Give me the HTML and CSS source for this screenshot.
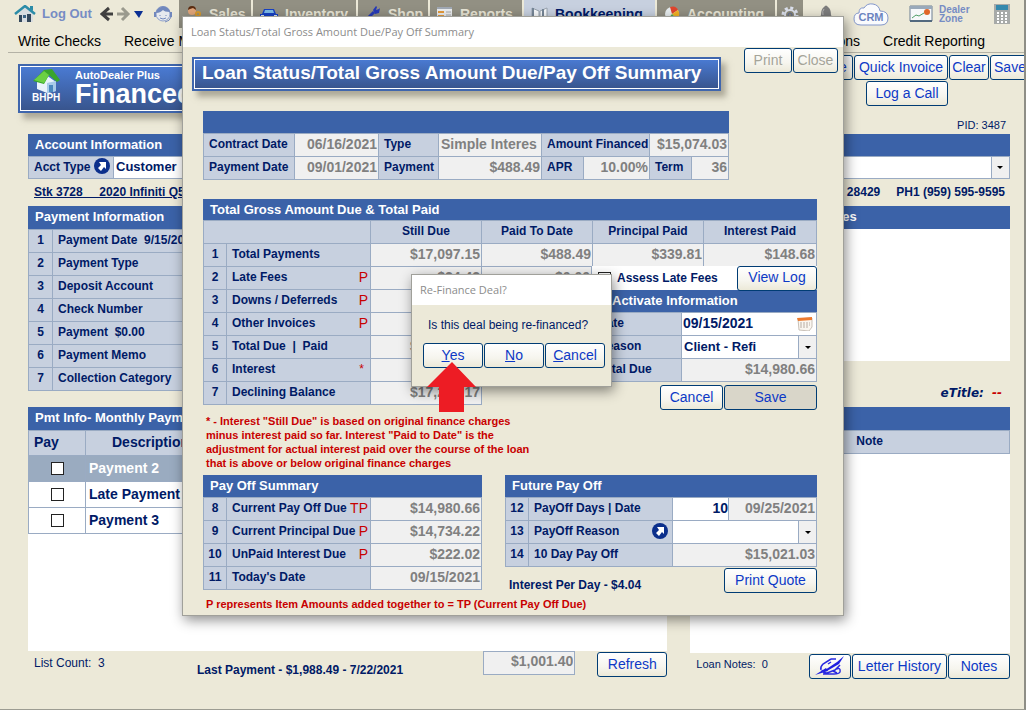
FILE: index.html
```html
<!DOCTYPE html>
<html lang="en">

<head>
    <meta charset="UTF-8">
    <meta name="viewport" content="width=device-width, initial-scale=1.0">
    <title>AutoDealer Plus - Financed</title>
    <link rel="stylesheet" href="styles.css">
</head>

<body>
    <div class="page">
        <!-- top bar -->
        <div class="topbar">
            <a href="#" class="logout">
                <svg width="22" height="18" viewBox="0 0 22 18">
                    <path d="M5 8v9h14V8l-7-6z" fill="#d9dde0" />
                    <path d="M1 9L11 1l10 8" fill="none" stroke="#2b8ca8" stroke-width="2.5" />
                    <path d="M16 1h3v5l-3-2z" fill="#2b8ca8" />
                    <path d="M5 10h3v7H5zM13 9h4v8h-4z" fill="#34485c" />
                    <path d="M9 10h3v3H9z" fill="#3d6484" />
                </svg>
                Log Out
            </a>
            <svg class="nav-arrows" width="44" height="16" viewBox="0 0 44 16">
                <path d="M13 8H3M9 2L2 8l7 6" fill="none" stroke="#404040" stroke-width="3" />
                <path d="M17 8h10M22 2l6 6-6 6" fill="none" stroke="#9a9a8e" stroke-width="3" />
                <path d="M34 5h9l-4 7z" fill="#0a2f94" />
            </svg>
            <svg class="support" width="20" height="18" viewBox="0 0 20 18">
                <path d="M3 9C3 -1 17 -1 17 9" fill="none" stroke="#7188bd" />
                <circle cx="10" cy="9" r="7" fill="#e6e9ee" stroke="#8fa1cb" />
                <path d="M3 8C4 0 16 0 17 7C13 7 11 6 10 5C8 7 6 8 3 8z" fill="#7188bd" />
                <path d="M1 7h2v5H1zM17 7h2v5h-2z" fill="#7188bd" />
                <path d="M7 13q3 2 6 0M7 10v1M13 10v1M18 12q-1 4-6 5" fill="none" stroke="#7188bd" />
            </svg>
            <nav class="tabs">
                <a href="#" class="tab tab-sales">
                    <svg width="16" height="16" viewBox="0 0 16 16">
                        <circle cx="6" cy="5" r="4" fill="#e2a67a" />
                        <path d="M2 4q0-4 4-4t4 4l-3-2-3 1z" fill="#5a2c12" />
                        <path d="M0 16q0-6 6-6t6 6z" fill="#3c5876" />
                        <circle cx="12" cy="8" r="2" fill="none" stroke="#d99a2a" stroke-width="2" />
                    </svg>
                    Sales
                </a>
                <a href="#" class="tab tab-inventory">
                    <svg width="18" height="16" viewBox="0 0 18 16">
                        <path d="M4 3h10l2 5h2v6H0V8h2z" fill="#1741c4" />
                        <path d="M5 4h8l1 3H4z" fill="#7dbbe8" />
                        <path d="M1 9h3v2H1zM14 9h3v2h-3z" fill="#dceaf4" />
                    </svg>
                    Inventory
                </a>
                <a href="#" class="tab tab-shop">
                    <svg width="16" height="16" viewBox="0 0 16 16">
                        <path d="M2 13L9 6" stroke="#2539b8" stroke-width="3" />
                        <path d="M8 4l3-4 1 1-1 3 3-1 1-1-1 5-4 1z" fill="#2539b8" />
                    </svg>
                    Shop
                </a>
                <a href="#" class="tab tab-reports">
                    <svg width="16" height="16" viewBox="0 0 16 16">
                        <path d="M0 1h15v14H0z" fill="#eceef0" />
                        <path d="M0 1h15v2H0z" fill="#a0a8b4" />
                        <path d="M1 5h6v2H1zM1 9h6v2H1z" fill="#e59b3c" />
                        <path d="M9 6h5M9 9h5" stroke="#aaa" />
                    </svg>
                    Reports
                </a>
                <a href="#" class="tab tab-books active">
                    <svg width="17" height="16" viewBox="0 0 17 16">
                        <path d="M1 2l7 3v11l-7-3zM16 2L9 5v11l7-3z" fill="#f8fafc" stroke="#98a2ae" />
                        <path d="M12 3v8M2 2v11" stroke="#768697" stroke-width="2" />
                    </svg>
                    Bookkeeping
                </a>
                <a href="#" class="tab tab-accounting">
                    <svg width="16" height="16" viewBox="0 0 16 16">
                        <circle cx="8" cy="8" r="7" fill="#e8eef0" />
                        <path d="M8 8L6 1q6-2 8 3z" fill="#e0452c" />
                        <path d="M8 8l6-4q3 5-1 9z" fill="#f4b323" />
                        <path d="M8 8l5 5q-5 4-9 0z" fill="#5ba845" />
                    </svg>
                    Accounting
                </a>
                <a href="#" class="tab tab-gear" aria-label="Settings">
                    <svg width="18" height="18" viewBox="0 0 18 18">
                        <circle cx="9" cy="9" r="7" fill="none" stroke="#dde2ee" stroke-width="3" stroke-dasharray="3 2.5" />
                        <circle cx="9" cy="9" r="5" fill="#8b8878" stroke="#dde2ee" stroke-width="2" />
                        <circle cx="9" cy="9" r="2" fill="none" stroke="#5d6b95" />
                    </svg>
                </a>
            </nav>
            <div class="quick-icons">
                <svg width="14" height="18" viewBox="0 0 14 18">
                    <path d="M5 2q2-3 4 0q3 2 3 8l2 4H0l2-4q0-6 3-8z" fill="#7d7d7d" />
                    <path d="M5 4q-2 2-1 6" stroke="#b5b5b5" fill="none" />
                </svg>
                <svg width="36" height="23" viewBox="0 0 36 23">
                    <path d="M8 22Q1 22 1 16Q1 10 6 10Q6 4 11 5Q14 0 20 1Q26 2 27 8Q35 8 35 15Q35 22 28 22z" fill="#fafbfd" stroke="#8397cb" />
                    <text x="18" y="18" text-anchor="middle" class="crm-text">CRM</text>
                </svg>
                <a href="#" class="dealer-zone">
                    <svg width="24" height="18" viewBox="0 0 24 18">
                        <path d="M1 1h22v15H1z" fill="#f6f8fa" stroke="#6d7f92" />
                        <path d="M1 1h22v3H1z" fill="#99a9ba" />
                        <path d="M3 13l4-3 3 1 5-3" stroke="#4f9e68" fill="none" />
                        <circle cx="18" cy="7" r="3" fill="#e0662a" />
                        <path d="M1 15h22v2H1z" fill="#53697f" />
                    </svg>
                    <span>Dealer<br>Zone</span>
                </a>
                <svg width="16" height="20" viewBox="0 0 16 20">
                    <path d="M0 0h16v20H0z" fill="#a7aaa8" />
                    <path d="M2 1h12v5H2z" fill="#3489ad" />
                    <path d="M3 9h2M7 9h2M11 9h2M3 12h2M7 12h2M11 12h2M3 15h2M7 15h2M11 15h2M3 18h2M7 18h2M11 18h2" stroke="#fff" stroke-width="2" />
                </svg>
            </div>
        </div>

        <nav class="menu">
            <a href="#">Write Checks</a>
            <a href="#">Receive M</a>
            <a href="#" class="menu-right">ons</a>
            <a href="#">Credit Reporting</a>
        </nav>

        <header class="page-head">
            <div class="banner page-banner">
                <div class="bhph">
                    <svg width="30" height="24" viewBox="0 0 30 24">
                        <path d="M5 12l9-6 10 7v9l-9 2-10-4z" fill="#e9f3fb" />
                        <path d="M15 14l9-2v10l-9 2z" fill="#a8cbe9" />
                        <path d="M1 12L12 1l8-1 8 11-3 2-8-7-5 9z" fill="#39a52b" />
                        <path d="M2 11L12 2l5 4-5 8z" fill="#6bd043" />
                        <path d="M17 16h4v7h-4z" fill="#4a87be" />
                    </svg>
                    <span>BHPH</span>
                </div>
                <div>
                    <div class="banner-small">AutoDealer Plus</div>
                    <h1 class="banner-big">Financed</h1>
                </div>
            </div>
            <div class="head-right">
                <div class="btn-row">
                    <button class="btn btn-first">e</button>
                    <button class="btn btn-invoice">Quick Invoice</button>
                    <button class="btn btn-clear">Clear</button>
                    <button class="btn btn-save">Save</button>
                </div>
                <button class="btn btn-call">Log a Call</button>
                <div class="pid">PID: 3487</div>
            </div>
        </header>

        <main class="columns">
            <!-- left column -->
            <section>
                <h2 class="bar">Account Information</h2>
                <div class="field">
                    <label class="field-label" for="acctType">Acct Type
                        <svg class="go" width="17" height="17" viewBox="0 0 17 17">
                            <circle cx="8" cy="8" r="8" fill="#0b2f8c" />
                            <path d="M5 4h7v7l-2-2-3 4-3-3 3-3z" fill="#fff" />
                        </svg>
                    </label>
                    <div class="combo">
                        <select id="acctType"><option>Customer</option></select>
                        <span class="combo-btn"></span>
                    </div>
                </div>
                <div class="summary stock">
                    <a href="#">Stk 3728 &nbsp; &nbsp; 2020 Infiniti Q5</a>
                </div>

                <h2 class="bar bar-tall">Payment Information</h2>
                <table class="grid">
                    <tr><th class="num">1</th><th>Payment Date &nbsp;9/15/20</th></tr>
                    <tr><th class="num">2</th><th>Payment Type</th></tr>
                    <tr><th class="num">3</th><th>Deposit Account</th></tr>
                    <tr><th class="num">4</th><th>Check Number</th></tr>
                    <tr><th class="num">5</th><th>Payment &nbsp;$0.00</th></tr>
                    <tr><th class="num">6</th><th>Payment Memo</th></tr>
                    <tr><th class="num">7</th><th>Collection Category</th></tr>
                </table>

                <h2 class="bar bar-tall list-head">Pmt Info- Monthly Paym</h2>
                <div class="list pay-list">
                    <table class="grid payments">
                        <colgroup>
                            <col class="col-pay">
                            <col class="col-desc">
                            <col>
                        </colgroup>
                        <tr class="head"><th>Pay</th><th class="center">Description</th><th></th></tr>
                        <tr class="selected">
                            <td class="center"><input type="checkbox" id="pay1"></td>
                            <td><label for="pay1">Payment 2</label></td><td></td>
                        </tr>
                        <tr>
                            <td class="center"><input type="checkbox" id="pay2"></td>
                            <td><label for="pay2">Late Payment</label></td><td></td>
                        </tr>
                        <tr>
                            <td class="center"><input type="checkbox" id="pay3"></td>
                            <td><label for="pay3">Payment 3</label></td><td></td>
                        </tr>
                    </table>
                </div>
                <div class="foot">
                    <span class="list-count">List Count: &nbsp;3</span>
                    <span class="last-payment">Last Payment - $1,988.49 - 7/22/2021</span>
                    <input class="total" type="text" value="$1,001.40" aria-label="Total" readonly>
                    <button class="btn btn-refresh">Refresh</button>
                </div>
            </section>

            <!-- right column -->
            <section>
                <h2 class="bar"></h2>
                <div class="field">
                    <div class="combo">
                        <select aria-label="Account"><option></option></select>
                        <span class="combo-btn"></span>
                    </div>
                </div>
                <div class="summary phones"><span>28429</span><span>PH1 (959) 595-9595</span></div>
                <h2 class="bar bar-tall bar-notes">es</h2>
                <div class="list notes-box"></div>
                <div class="etitle">eTitle: <span>--</span></div>
                <h2 class="bar bar-tall"></h2>
                <div class="list loan-notes">
                    <table class="grid">
                        <tr><th class="note-col">Note</th></tr>
                    </table>
                </div>
                <div class="foot foot-right">
                    <span class="note-count">Loan Notes: &nbsp;0</span>
                    <button class="btn btn-pen" aria-label="Write note">
                        <svg width="32" height="22" viewBox="0 0 32 22">
                            <path d="M1 20L12 13l2 3z" fill="#1f1fe0" />
                            <path d="M11 15L23 7L30 1L25 9L13 16z" fill="#1f1fe0" />
                            <path d="M17 4h5M17 4L9 9Q6 12 7 15M8 15Q9 18 13 18L21 15L26 10M14 9l3-2M22 14Q27 12 26 17Q25 19 20 19H9M19 16l4 2" fill="none" stroke="#2a2ae0" stroke-width="1.5" />
                        </svg>
                    </button>
                    <button class="btn btn-letter">Letter History</button>
                    <button class="btn btn-notes">Notes</button>
                </div>
            </section>
        </main>
    </div>

    <!-- loan status window -->
    <div class="overlay">
        <div class="window loan" role="dialog" aria-labelledby="loanTitle">
            <div class="window-title" id="loanTitle">Loan Status/Total Gross Amount Due/Pay Off Summary</div>
            <div class="window-head">
                <h2 class="banner window-banner">Loan Status/Total Gross Amount Due/Pay Off Summary</h2>
                <div class="btn-row">
                    <button class="btn btn-print" disabled>Print</button>
                    <button class="btn btn-close" disabled>Close</button>
                </div>
            </div>
            <div class="window-body">
                <div class="contract">
                    <div class="bar"></div>
                    <table class="grid">
                        <colgroup>
                            <col class="c-date">
                            <col class="c-dateval">
                            <col class="c-type">
                            <col class="c-typeval">
                            <col class="c-apr">
                            <col class="c-aprval">
                            <col class="c-apr">
                            <col>
                        </colgroup>
                        <tr>
                            <th>Contract Date</th><td class="val">06/16/2021</td>
                            <th>Type</th><td class="val val-left">Simple Interes</td>
                            <th colspan="2">Amount Financed</th><td class="val" colspan="2">$15,074.03</td>
                        </tr>
                        <tr>
                            <th>Payment Date</th><td class="val">09/01/2021</td>
                            <th>Payment</th><td class="val">$488.49</td>
                            <th>APR</th><td class="val">10.00%</td>
                            <th>Term</th><td class="val">36</td>
                        </tr>
                    </table>
                </div>

                <h3 class="bar gross-head">Total Gross Amount Due &amp; Total Paid</h3>
                <table class="grid">
                    <colgroup>
                        <col class="c-num">
                        <col class="c-label">
                        <col class="c-amount">
                        <col class="c-amount">
                        <col class="c-amount">
                        <col>
                    </colgroup>
                    <tr>
                        <th colspan="2"></th>
                        <th class="center">Still Due</th>
                        <th class="center">Paid To Date</th>
                        <th class="center">Principal Paid</th>
                        <th class="center">Interest Paid</th>
                    </tr>
                    <tr>
                        <th class="num">1</th><th>Total Payments</th>
                        <td class="val">$17,097.15</td>
                        <td class="val">$488.49</td>
                        <td class="val">$339.81</td>
                        <td class="val">$148.68</td>
                    </tr>
                </table>
                <div class="split">
                    <table class="grid dues">
                        <colgroup>
                            <col class="c-num">
                            <col class="c-label">
                            <col class="c-amount">
                            <col>
                        </colgroup>
                        <tr><th class="num">2</th><th>Late Fees<b class="p">P</b></th><td class="val">$24.42</td><td class="val">$0.00</td></tr>
                        <tr><th class="num">3</th><th>Downs / Deferreds<b class="p">P</b></th><td class="val"></td><td class="val"></td></tr>
                        <tr><th class="num">4</th><th>Other Invoices<b class="p">P</b></th><td class="val"></td><td class="val"></td></tr>
                        <tr><th class="num">5</th><th>Total Due &nbsp;| &nbsp;Paid</th><td class="val">$17,121.57</td><td class="val"></td></tr>
                        <tr><th class="num">6</th><th>Interest<b class="p star">*</b></th><td class="val"></td><td class="val"></td></tr>
                        <tr><th class="num">7</th><th>Declining Balance</th><td class="val">$17,244.17</td><td class="blank"></td></tr>
                    </table>
                    <div class="activate">
                        <div class="assess">
                            <input type="checkbox" id="assess">
                            <label for="assess">Assess Late Fees</label>
                            <button class="btn btn-log">View Log</button>
                        </div>
                        <h3 class="bar">Activate Information</h3>
                        <table class="grid">
                            <colgroup>
                                <col class="c-activate">
                                <col>
                            </colgroup>
                            <tr>
                                <th><label for="actDate">Date</label></th>
                                <td class="edit">
                                    <div class="date-box">
                                        <input type="text" id="actDate" value="09/15/2021">
                                        <svg width="16" height="14" viewBox="0 0 16 14">
                                            <path d="M1 2l14-1v9l-3 4-10-1z" fill="#faf6f0" stroke="#c9c1b8" />
                                            <path d="M0 1l15-1v3L1 4z" fill="#ee7b2e" />
                                            <path d="M3 6h10M3 8h10M3 10h8" stroke="#b8aca2" stroke-dasharray="2 1" />
                                        </svg>
                                    </div>
                                </td>
                            </tr>
                            <tr>
                                <th><label for="actReason">Reason</label></th>
                                <td class="edit">
                                    <div class="combo">
                                        <select id="actReason"><option>Client - Refi</option></select>
                                        <span class="combo-btn"></span>
                                    </div>
                                </td>
                            </tr>
                            <tr><th>Total Due</th><td class="val">$14,980.66</td></tr>
                        </table>
                        <div class="btn-row activate-btns">
                            <button class="btn btn-cancel">Cancel</button>
                            <button class="btn btn-grey">Save</button>
                        </div>
                    </div>
                </div>

                <p class="red">* - Interest "Still Due" is based on original finance charges<br>
                    minus interest paid so far. Interest "Paid to Date" is the<br>
                    adjustment for actual interest paid over the course of the loan<br>
                    that is above or below original finance charges</p>

                <div class="payoff">
                    <div class="payoff-summary">
                        <h3 class="bar">Pay Off Summary</h3>
                        <table class="grid">
                            <colgroup>
                                <col class="c-num">
                                <col class="c-label">
                                <col>
                            </colgroup>
                            <tr><th class="num">8</th><th>Current Pay Off Due<b class="p">TP</b></th><td class="val">$14,980.66</td></tr>
                            <tr><th class="num">9</th><th>Current Principal Due<b class="p">P</b></th><td class="val">$14,734.22</td></tr>
                            <tr><th class="num">10</th><th>UnPaid Interest Due<b class="p">P</b></th><td class="val">$222.02</td></tr>
                            <tr><th class="num">11</th><th>Today's Date</th><td class="val">09/15/2021</td></tr>
                        </table>
                    </div>
                    <div class="payoff-future">
                        <h3 class="bar">Future Pay Off</h3>
                        <table class="grid">
                            <colgroup>
                                <col class="c-num">
                                <col class="c-label">
                                <col class="c-days">
                                <col>
                            </colgroup>
                            <tr>
                                <th class="num">12</th><th><label for="days">PayOff Days | Date</label></th>
                                <td class="edit"><input type="text" class="days" id="days" value="10"></td>
                                <td class="val">09/25/2021</td>
                            </tr>
                            <tr>
                                <th class="num">13</th>
                                <th><label for="offReason">PayOff Reason</label>
                                    <svg class="go go-right" width="17" height="17" viewBox="0 0 17 17">
                                        <circle cx="8" cy="8" r="8" fill="#0b2f8c" />
                                        <path d="M5 4h7v7l-2-2-3 4-3-3 3-3z" fill="#fff" />
                                    </svg>
                                </th>
                                <td class="edit" colspan="2">
                                    <div class="combo">
                                        <select id="offReason"><option></option></select>
                                        <span class="combo-btn"></span>
                                    </div>
                                </td>
                            </tr>
                            <tr><th class="num">14</th><th>10 Day Pay Off</th><td class="val" colspan="2">$15,021.03</td></tr>
                        </table>
                        <div class="quote">
                            <span>Interest Per Day - $4.04</span>
                            <button class="btn btn-quote">Print Quote</button>
                        </div>
                    </div>
                </div>
                <p class="red legend">P represents Item Amounts added together to = TP (Current Pay Off Due)</p>
            </div>
        </div>
    </div>

    <!-- confirm box -->
    <div class="overlay overlay-confirm">
        <div class="window confirm" role="dialog" aria-labelledby="confirmTitle">
            <div class="window-title" id="confirmTitle">Re-Finance Deal?</div>
            <p class="question">Is this deal being re-financed?</p>
            <div class="btn-row">
                <button class="btn"><u>Y</u>es</button>
                <button class="btn"><u>N</u>o</button>
                <button class="btn"><u>C</u>ancel</button>
            </div>
            <svg class="pointer" width="50" height="50" viewBox="0 0 50 50">
                <path d="M25 0l24 25H37v25H12V25H0z" fill="#ed1c24" />
            </svg>
        </div>
    </div>
</body>

</html>
```
FILE: styles.css
```css
* {
    margin: 0;
    padding: 0;
    box-sizing: border-box;
}

body {
    position: relative;
    font-family: "Liberation Sans", Arial, sans-serif;
    font-size: 12px;
    color: #001a66;
    background-color: #ece9d8;
}

a {
    color: inherit;
    text-decoration: none;
}

svg {
    flex: none;
}

.page {
    min-height: 100vh;
    border-right: 2px solid #8e8e86;
    border-bottom: 1px solid #9c9c92;
    overflow: hidden;
}

/* top bar */
.topbar {
    display: flex;
    height: 28px;
    padding-left: 14px;
    align-items: center;
}

.logout {
    display: flex;
    gap: 6px;
    width: 86px;
    font-size: 13px;
    font-weight: bold;
    line-height: 18px;
    color: #768cc4;
    white-space: nowrap;
}

.support {
    margin-left: 9px;
}

.tabs {
    display: flex;
    gap: 2px;
    margin-left: 6px;
    background-color: #ece9d8;
}

.tab {
    display: flex;
    gap: 7px;
    height: 28px;
    padding: 6px 0 0 7px;
    font-size: 14px;
    font-weight: bold;
    color: #e8e5d6;
    background-color: #929083;
}

.tab-sales {
    width: 72px;
}

.tab-inventory {
    width: 103px;
}

.tab-shop {
    width: 70px;
}

.tab-reports {
    width: 92px;
}

.tab-books {
    width: 131px;
}

.tab-accounting {
    width: 118px;
}

.tab-gear {
    width: 26px;
    padding-left: 4px;
}

.tab.active {
    color: #001a66;
    background-color: #c7d0df;
}

.quick-icons {
    display: flex;
    gap: 20px;
    align-items: center;
    margin-left: auto;
    padding-right: 14px;
}

.crm-text {
    font-size: 11px;
    font-weight: bold;
    fill: #6c84c0;
}

.dealer-zone {
    display: flex;
    gap: 6px;
    width: 65px;
    font-size: 10px;
    font-weight: bold;
    line-height: 9px;
    color: #768cc4;
}

/* menu */
.menu {
    display: flex;
    gap: 23px;
    height: 25px;
    margin-left: 8px;
    padding: 5px 39px 0 10px;
    border-bottom: 1px solid #b4b2a6;
    font-size: 14px;
    line-height: 17px;
    color: #000;
}

.menu-right {
    margin-left: auto;
}

/* page header */
.page-head {
    display: flex;
    justify-content: space-between;
    padding: 2px 0 2px 18px;
}

.banner {
    color: #fff;
    background: linear-gradient(#4a7bd4, #38548c);
    border: 2px solid #3f66ad;
    outline: 1px solid #fff;
    outline-offset: -3px;
    box-shadow: 5px 6px 6px rgba(110, 105, 90, 0.5);
}

.page-banner {
    display: flex;
    gap: 13px;
    width: 320px;
    height: 49px;
    margin-top: 9px;
    padding: 3px 12px;
}

.bhph {
    width: 30px;
    font-size: 10px;
    font-weight: bold;
    line-height: 10px;
}

.bhph svg {
    display: block;
}

.banner-small {
    font-size: 11px;
    font-weight: bold;
    line-height: 12px;
}

.banner-big {
    font-size: 27px;
    line-height: 26px;
}

.head-right {
    display: flex;
    flex-direction: column;
    align-items: flex-end;
}

.btn-row {
    display: flex;
    gap: 1px;
}

.btn {
    height: 25px;
    padding-bottom: 2px;
    border: 1px solid #003c74;
    border-radius: 3px;
    font-family: inherit;
    font-size: 14px;
    color: #0d39c6;
    white-space: nowrap;
    background: linear-gradient(#fff, #f6f5ee 60%, #ece9d8);
}

.btn:disabled {
    color: #a5a499;
}

.head-right .btn-row {
    margin-right: -6px;
}

.btn-first {
    width: 20px;
}

.btn-invoice {
    width: 94px;
}

.btn-clear {
    width: 40px;
}

.btn-save {
    width: 40px;
}

.btn-call {
    width: 82px;
    margin: 1px 76px 0 0;
}

.pid {
    margin: 12px 18px 0 0;
    font-size: 11px;
    line-height: 14px;
}

/* main columns */
.columns {
    display: grid;
    grid-template-columns: 2fr 1fr;
    gap: 23px;
    padding: 0 14px 0 28px;
}

.bar {
    height: 22px;
    padding-left: 7px;
    font-size: 13px;
    font-weight: bold;
    line-height: 22px;
    color: #fff;
    background-color: #3b62a8;
}

.bar-tall {
    height: 23px;
}

.bar-notes {
    padding-left: 152px;
}

.field {
    display: flex;
    height: 23px;
    border: 1px solid #9aabc3;
    background-color: #c7d0df;
}

.field-label {
    display: flex;
    justify-content: space-between;
    align-items: center;
    width: 85px;
    padding: 0 2px 2px 5px;
    border-right: 1px solid #9aabc3;
    font-weight: bold;
}

.combo {
    display: flex;
    flex: 1;
    height: 22px;
    background-color: #fff;
}

.field .combo {
    height: 21px;
}

.combo select {
    flex: 1;
    min-width: 0;
    padding: 0 0 2px 2px;
    border: 0;
    appearance: none;
    font-family: inherit;
    font-size: 13px;
    font-weight: bold;
    color: #001a66;
    background: #fff;
}

.combo-btn {
    display: flex;
    align-items: center;
    justify-content: center;
    width: 18px;
    border-left: 1px solid #9aabc3;
    background-color: #f0f0f0;
}

.combo-btn::before {
    content: "";
    border: 3px solid transparent;
    border-top-color: #000;
    border-bottom: 0;
}

.summary {
    height: 27px;
    line-height: 26px;
    font-weight: bold;
}

.stock {
    padding-left: 6px;
    text-decoration: underline;
}

.phones {
    display: flex;
    justify-content: flex-end;
    gap: 16px;
    padding-right: 5px;
}

/* tables */
.grid {
    width: 100%;
    table-layout: fixed;
    border-collapse: collapse;
}

.grid tr {
    height: 23px;
}

.grid th,
.grid td {
    height: 23px;
    padding-bottom: 2px;
    border: 1px solid #9aabc3;
    line-height: 20px;
    white-space: nowrap;
    overflow: hidden;
}

.grid th {
    padding-left: 5px;
    text-align: left;
    background-color: #c7d0df;
}

.grid .num {
    width: 24px;
    padding-left: 0;
    text-align: center;
}

.grid .center {
    padding-left: 0;
    text-align: center;
}

.grid .val {
    padding-right: 1px;
    font-size: 14px;
    font-weight: bold;
    text-align: right;
    color: #808080;
    background-color: #f0f0f0;
}

.grid .val-left {
    padding-left: 2px;
    text-align: left;
}

.grid .blank {
    border: 0;
}

.grid .edit {
    padding-bottom: 0;
    background-color: #fff;
}

.p {
    float: right;
    padding-right: 2px;
    font-size: 14px;
    font-weight: normal;
    line-height: 20px;
    color: #c80000;
}

.star {
    padding-right: 6px;
    font-size: 12px;
}

.go-right {
    float: right;
    margin: 2px 3px 0 0;
}

/* payments list */
.list {
    background-color: #fff;
}

.list-head {
    margin-top: 16px;
}

.pay-list {
    height: 221px;
}

.payments {
    font-size: 14px;
    font-weight: bold;
}

.payments tr {
    height: 26px;
}

.payments .head {
    height: 25px;
}

.payments td {
    padding-left: 3px;
}

.selected {
    color: #fff;
    background-color: #9aabc0;
}

.col-pay {
    width: 57px;
}

.col-desc {
    width: 130px;
}

input[type="checkbox"] {
    width: 13px;
    height: 13px;
    border: 1px solid #222;
    appearance: none;
    vertical-align: middle;
    background-color: #fff;
}

.notes-box {
    height: 132px;
}

.etitle {
    height: 46px;
    padding: 23px 8px 0 0;
    font-family: "DejaVu Sans", Verdana, sans-serif;
    font-size: 12px;
    font-style: italic;
    font-weight: bold;
    line-height: 18px;
    text-align: right;
}

.etitle span {
    margin-left: 4px;
    color: #c80000;
}

.loan-notes {
    height: 223px;
}

.grid .note-col {
    padding-left: 165px;
}

.foot {
    display: flex;
    align-items: flex-start;
    line-height: 14px;
}

.list-count {
    width: 169px;
    padding: 5px 0 0 6px;
}

.last-payment {
    flex: 1;
    padding-top: 12px;
    font-weight: bold;
}

.total {
    width: 92px;
    height: 24px;
    padding: 0 1px 5px;
    border: 1px solid #9aabc3;
    font-family: inherit;
    font-size: 14px;
    font-weight: bold;
    text-align: right;
    color: #808080;
    background-color: #f0f0f0;
}

.btn-refresh {
    width: 70px;
    margin: 1px 0 0 22px;
}

.foot-right {
    gap: 1px;
    padding-top: 1px;
}

.note-count {
    flex: 1;
    padding: 3px 0 0 6px;
    font-size: 11px;
}

.btn-pen {
    width: 42px;
    padding: 0;
}

.btn-letter {
    width: 95px;
}

.btn-notes {
    width: 62px;
}

/* windows */
.overlay {
    position: absolute;
    top: 16px;
    left: 0;
    right: 0;
    display: flex;
    justify-content: center;
}

.overlay-confirm {
    top: 274px;
    right: 3px;
}

.window {
    border: 1px solid #a0a09a;
    background-color: #ece9d8;
    box-shadow: 2px 4px 12px rgba(0, 0, 0, 0.45);
}

.window-title {
    height: 30px;
    padding-left: 8px;
    font-family: "Open Sans", "Noto Sans", sans-serif;
    font-size: 11px;
    line-height: 30px;
    color: #8c8c8c;
    background-color: #fff;
}

.loan {
    width: 662px;
}

.window-head {
    display: flex;
    justify-content: space-between;
    padding: 1px 5px 0 9px;
}

.window-banner {
    width: 529px;
    height: 34px;
    margin-top: 9px;
    padding-left: 8px;
    font-size: 19px;
    line-height: 28px;
    white-space: nowrap;
}

.btn-print {
    width: 48px;
}

.btn-close {
    width: 45px;
}

.window-body {
    padding: 20px 26px 0 20px;
}

.contract {
    width: 526px;
}

.c-date {
    width: 91px;
}

.c-dateval {
    width: 84px;
}

.c-type {
    width: 60px;
}

.c-typeval {
    width: 103px;
}

.c-apr {
    width: 42px;
}

.c-aprval {
    width: 66px;
}

.c-num {
    width: 23px;
}

.c-label {
    width: 144px;
}

.c-amount {
    width: 111px;
}

.c-days {
    width: 56px;
}

.c-activate {
    width: 89px;
}

.gross-head {
    height: 21px;
    margin-top: 19px;
}

.split {
    display: flex;
    margin-top: -1px;
}

.dues {
    width: 389px;
    align-self: flex-start;
}

.activate {
    flex: 1;
}

.assess {
    display: flex;
    gap: 6px;
    align-items: center;
    height: 24px;
    padding-left: 6px;
    font-weight: bold;
    background-color: #fff;
}

.btn-log {
    width: 80px;
    margin-left: auto;
}

.activate .bar {
    padding-left: 20px;
}

.date-box {
    display: flex;
    align-items: center;
    padding-right: 3px;
}

.date-box input,
.days {
    width: 100%;
    height: 20px;
    padding: 0 0 2px 1px;
    border: 0;
    font-family: inherit;
    font-size: 14px;
    font-weight: bold;
    color: #001a66;
}

.days {
    text-align: right;
}

.activate-btns {
    justify-content: flex-end;
    padding-top: 3px;
}

.btn-cancel {
    width: 63px;
}

.btn-grey {
    width: 93px;
    background: #d9d6c9;
}

.red {
    padding: 4px 0 5px 3px;
    font-size: 11px;
    font-weight: bold;
    line-height: 14px;
    color: #c80000;
}

.payoff {
    display: flex;
    gap: 23px;
}

.payoff-summary {
    width: 279px;
}

.payoff-future {
    flex: 1;
}

.quote {
    display: flex;
    justify-content: space-between;
    height: 30px;
    padding: 1px 0 0 4px;
    font-weight: bold;
    line-height: 34px;
}

.btn-quote {
    width: 93px;
}

.legend {
    padding: 0 0 4px 3px;
}

/* confirm box */
.confirm {
    position: relative;
    width: 201px;
    height: 113px;
}

.question {
    padding: 12px 0 10px 16px;
    line-height: 16px;
}

.confirm .btn-row {
    padding-left: 11px;
}

.confirm .btn {
    width: 60px;
}

.pointer {
    position: absolute;
    top: 87px;
    left: 15px;
}
```
